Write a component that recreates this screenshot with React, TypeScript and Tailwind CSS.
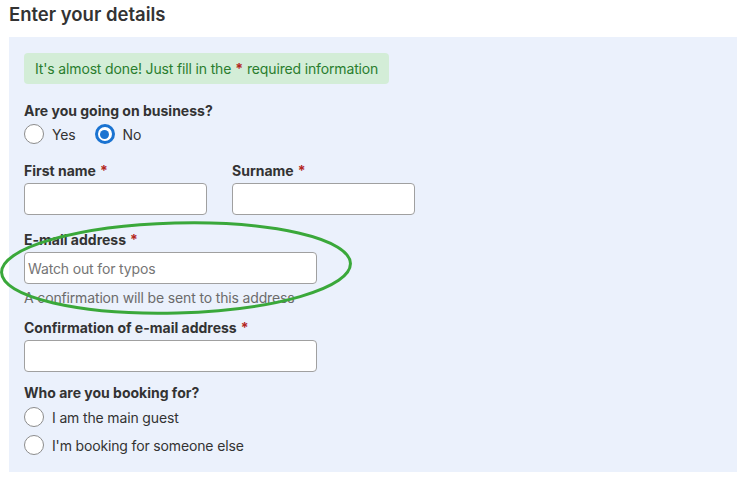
import React from "react";

const Req = () => <span className="text-[#b3261e] ml-1">*</span>;

const Radio = ({ checked, label }: { checked?: boolean; label: string }) => (
  <label className="flex items-center h-5">
    {checked ? (
      <span className="w-5 h-5 rounded-full border-[3px] border-[#1a73d1] bg-white flex items-center justify-center">
        <span className="w-[9px] h-[9px] rounded-full bg-[#1a73d1]" />
      </span>
    ) : (
      <span className="w-5 h-5 rounded-full border border-[#8c8c8c] bg-white" />
    )}
    <span className="ml-2 text-[14px] tracking-[-0.15px] text-[#333]">{label}</span>
  </label>
);

const Field = ({ label, width, placeholder }: { label: string; width: string; placeholder?: string }) => (
  <div>
    <div className="text-[14px] leading-5 font-bold text-[#333]">
      {label}
      <Req />
    </div>
    <div
      className={`${width} h-8 mt-[2px] bg-white border border-[#a0a0a0] rounded-[4px] flex items-center px-[3px] text-[14px] tracking-[-0.15px] text-[#757575]`}
    >
      {placeholder}
    </div>
  </div>
);

const App = () => {
  return (
    <div className="relative w-[747px] h-[484px] bg-white font-['Inter','Noto_Sans',sans-serif] overflow-hidden">
      <h1 className="px-[9px] pt-[2px] h-[37px] text-[18.5px] leading-6 font-semibold text-[#333]">
        Enter your details
      </h1>

      <div className="mx-[9px] mr-[10px] h-[435px] bg-[#ebf1fc] pl-[15px] pt-4">
        <div className="inline-flex items-center h-[31px] px-[11px] rounded-[4px] bg-[#d3edd7] text-[14px] tracking-[-0.15px] text-[#2a7d2e]">
          It's almost done! Just fill in the
          <span className="text-[#b3261e] mx-1 font-bold">*</span>
          required information
        </div>

        <div className="mt-[17px] text-[14px] leading-5 font-bold text-[#333]">Are you going on business?</div>
        <div className="mt-[3px] flex gap-[19px]">
          <Radio label="Yes" />
          <Radio label="No" checked />
        </div>

        <div className="mt-[17px] flex gap-[25px]">
          <Field label="First name" width="w-[183px]" />
          <Field label="Surname" width="w-[183px]" />
        </div>

        <div className="mt-[15px]">
          <Field label="E-mail address" width="w-[293px]" placeholder="Watch out for typos" />
        </div>
        <div className="mt-1 text-[14px] leading-5 tracking-[-0.15px] text-[#6b6b6b]">
          A confirmation will be sent to this address
        </div>

        <div className="mt-[10px]">
          <Field label="Confirmation of e-mail address" width="w-[293px]" />
        </div>

        <div className="mt-[11px] text-[14px] leading-5 font-bold text-[#333]">Who are you booking for?</div>
        <div className="mt-1 flex flex-col gap-2">
          <Radio label="I am the main guest" />
          <Radio label="I'm booking for someone else" />
        </div>
      </div>

      {/* highlight ring */}
      <svg className="absolute left-0 top-[218px]" width="356" height="100" viewBox="0 0 356 100">
        <ellipse cx="176" cy="50" rx="174.5" ry="45" fill="none" stroke="#3aa83a" strokeWidth="3" transform="rotate(-1.5 176 50)" />
      </svg>
    </div>
  );
};

export default App;
